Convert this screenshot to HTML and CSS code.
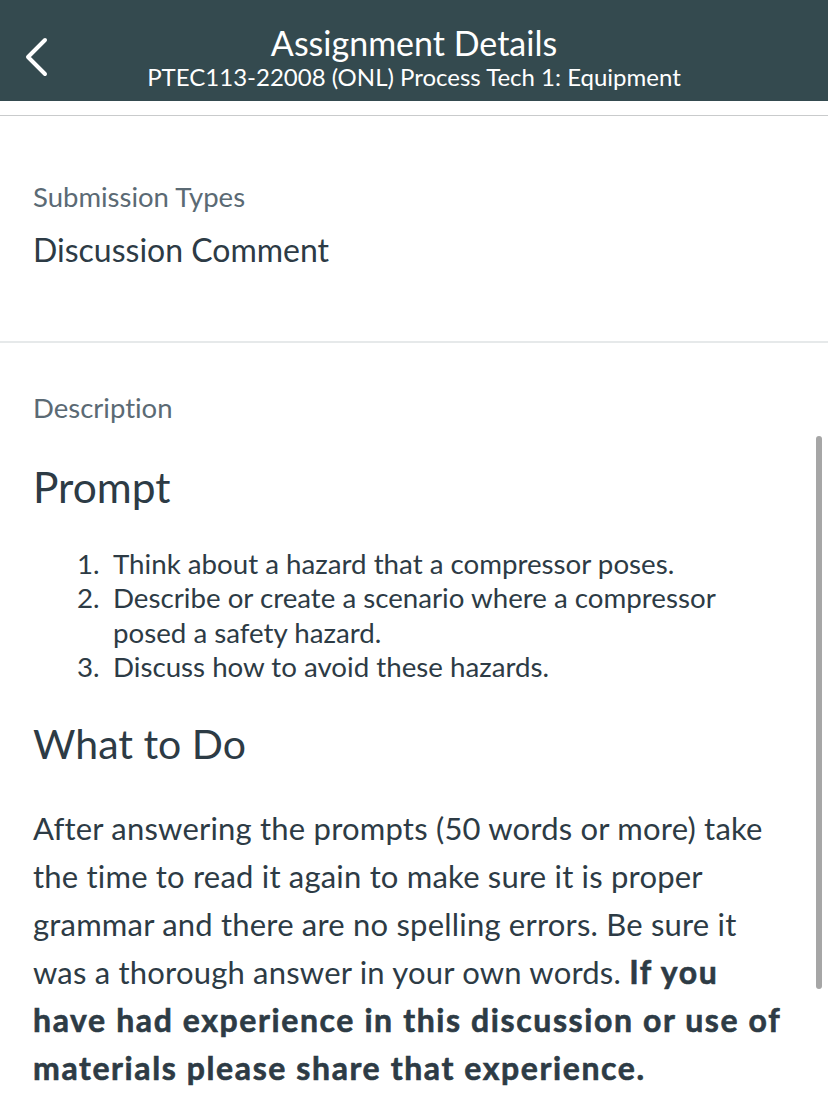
FILE: index.html
```html
<!DOCTYPE html>
<html lang="en">
<head>
<meta charset="utf-8">
<title>Assignment Details</title>
<link rel="stylesheet" href="styles.css">
</head>
<body>
<header class="topbar">
  <button class="back" aria-label="Back">
    <svg width="28" height="40" viewBox="0 0 28 40"><path d="M22 3 L5 20 L22 37" fill="none" stroke="#fff" stroke-width="4" stroke-linecap="round" stroke-linejoin="round"/></svg>
  </button>
  <div class="titles">
    <div class="title">Assignment Details</div>
    <div class="subtitle">PTEC113-22008 (ONL) Process Tech 1: Equipment</div>
  </div>
</header>
<div class="topline"></div>
<main class="content">
  <section class="section sub">
    <div class="label">Submission Types</div>
    <div class="value">Discussion Comment</div>
  </section>
  <section class="section desc">
    <div class="label">Description</div>
    <h2 class="h">Prompt</h2>
    <ol class="list">
      <li>Think about a hazard that a compressor poses.</li>
      <li>Describe or create a scenario where a compressor posed a safety hazard.</li>
      <li>Discuss how to avoid these hazards.</li>
    </ol>
    <h2 class="h h2">What to Do</h2>
    <p class="para">After answering the prompts (50 words or more) take the time to read it again to make sure it is proper grammar and there are no spelling errors. Be sure it was a thorough answer in your own words. <strong>If you have had experience in this discussion or use of materials please share that experience.</strong></p>
  </section>
</main>
<div class="scrollbar"></div>
</body>
</html>
```
FILE: styles.css
```css
html, body {
  margin: 0;
  padding: 0;
  background: #fff;
  overflow: hidden;
  height: 1102px;
}
body {
  font-family: Lato, "Open Sans", sans-serif;
  font-variant-ligatures: none;
  color: #2d3b45;
  width: 828px;
}
.topbar {
  position: relative;
  height: 101px;
  box-sizing: border-box;
  padding-top: 24px;
  background: #344a4f;
  display: flex;
  align-items: flex-start;
  justify-content: center;
}
.back {
  position: absolute;
  left: 23px;
  top: 37px;
  background: none;
  border: 0;
  padding: 0;
  width: 28px;
  height: 40px;
}
.back svg { display: block; }
.titles {
  text-align: center;
  color: #fff;
}
.title {
  font-size: 34px;
  line-height: 38px;
}
.subtitle {
  font-size: 24px;
  line-height: 30px;
}
.topline {
  height: 1px;
  background: #c9cbcc;
  margin-top: 14px;
}
.section {
  padding: 0 45px 0 33px;
}
.sub {
  padding-top: 64px;
  padding-bottom: 72px;
  border-bottom: 2px solid #e6e9ea;
}
.label {
  font-size: 27.5px;
  line-height: 34px;
  color: #5b6a74;
}
.value {
  font-size: 32px;
  line-height: 38px;
  margin-top: 17px;
}
.desc {
  padding-top: 48px;
}
.label + .h { margin-top: 37px; }
.h {
  font-weight: 400;
  font-size: 42.5px;
  line-height: 50px;
  margin: 0;
}
.list {
  list-style: none;
  counter-reset: item;
  margin: 35px 0 0;
  padding-left: 44px;
  font-size: 27.7px;
  line-height: 34.4px;
}
.list li {
  counter-increment: item;
  display: flex;
}
.list li::before {
  content: counter(item) ".";
  flex: 0 0 36px;
}
.h2 {
  margin-top: 34px;
  font-size: 41px;
}
.para {
  font-size: 31px;
  line-height: 48px;
  letter-spacing: 0.2px;
  margin: 35px 0 0;
}
.para strong {
  font-weight: 700;
  font-size: 32px;
  letter-spacing: 1.6px;
  -webkit-text-stroke: 0.6px #2d3b45;
}
.scrollbar {
  position: absolute;
  left: 816px;
  top: 436px;
  width: 6px;
  height: 553px;
  border-radius: 3px;
  background: #a6a6a6;
}
```
